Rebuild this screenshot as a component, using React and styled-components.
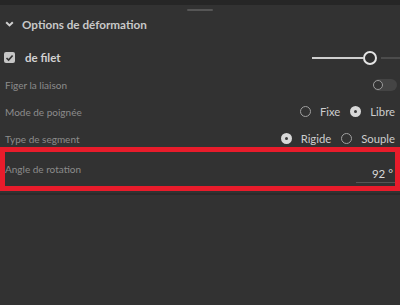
import styled, { createGlobalStyle } from "styled-components";

const Global = createGlobalStyle`
  html, body { margin: 0; padding: 0; background: #323232; }
  body { font-family: Lato, "Open Sans", sans-serif; }
  #root { width: 400px; height: 305px; overflow: hidden; }
`;

const Panel = styled.div`
  width: 400px;
  height: 305px;
  background: #323232;
  display: flex;
  flex-direction: column;
`;

const TopBand = styled.div`
  height: 5px;
  background: #262626;
`;

const Grip = styled.div`
  width: 26px;
  height: 2px;
  margin: 4px auto 0;
  border-radius: 1px;
  background: #565656;
`;

const Header = styled.div`
  height: 26px;
  display: flex;
  align-items: center;
  gap: 8px;
  padding: 0 5px;
  color: #c9c9c9;
  font-size: 11.7px;
  font-weight: 700;
`;

const Body = styled.div`
  margin-top: 7px;
  padding: 0 5px;
  display: flex;
  flex-direction: column;
`;

const Row = styled.div`
  height: ${(p) => p.$h || 27}px;
  display: flex;
  align-items: center;
  justify-content: space-between;
  outline: ${(p) => (p.$highlight ? "5px solid #e81c2b" : "none")};
`;

const Label = styled.span`
  color: #8c8c8c;
  font-size: 10px;
`;

const CheckLabel = styled.label`
  display: flex;
  align-items: center;
  gap: 10px;
  color: #d2d2d2;
  font-size: 11.5px;
  font-weight: 700;
  margin-left: -1px;
`;

const Box = styled.span`
  width: 11px;
  height: 11px;
  border-radius: 2px;
  background: #c6c6c6;
  display: flex;
  align-items: center;
  justify-content: center;
`;

const Slider = styled.div`
  display: flex;
  align-items: center;
  margin-right: -5px;
`;

const Track = styled.div`
  width: ${(p) => p.$w}px;
  height: 2px;
  background: ${(p) => (p.$on ? "#cfcfcf" : "#4c4c4c")};
`;

const Thumb = styled.div`
  width: 10px;
  height: 10px;
  border: 2px solid #e4e4e4;
  border-radius: 50%;
  background: #2f2f2f;
  margin: 0 4px 0 0;
`;

const Toggle = styled.div`
  width: 24px;
  height: 12px;
  border-radius: 6px;
  background: #444;
  display: flex;
  align-items: center;
  margin-right: -2px;
`;

const Knob = styled.div`
  width: 8px;
  height: 8px;
  border: 1.5px solid #9a9a9a;
  border-radius: 50%;
  background: #333;
`;

const Options = styled.div`
  display: flex;
  align-items: center;
  gap: 10px;
`;

const Option = styled.label`
  display: flex;
  align-items: center;
  gap: 9px;
  color: #cdcdcd;
  font-size: 11.3px;
`;

const Radio = styled.span`
  box-sizing: border-box;
  width: 11px;
  height: 11px;
  border-radius: 50%;
  border: ${(p) => (p.$on ? "4px solid #d8d8d8" : "1.5px solid #a0a0a0")};
  background: ${(p) => (p.$on ? "#3a3a3a" : "transparent")};
`;

const Value = styled.div`
  width: 37px;
  text-align: right;
  color: #dadada;
  font-size: 11.5px;
  padding: 5px 2px 2px 0;
  border-bottom: 1px solid #555;
  margin-bottom: -6px;
`;

const Divider = styled.div`
  height: 2px;
  margin-top: 7px;
  background: #2a2a2a;
`;

function Chevron() {
  return (
    <svg width="9" height="6" viewBox="0 0 9 6">
      <path d="M1.2 1.2 L4.5 4.4 L7.8 1.2" fill="none" stroke="#cfcfcf" strokeWidth="2" />
    </svg>
  );
}

function Check() {
  return (
    <svg width="9" height="8" viewBox="0 0 9 8">
      <path d="M1.5 4 L3.6 6 L7.6 1.5" fill="none" stroke="#333" strokeWidth="1.7" />
    </svg>
  );
}

function RadioGroup({ items, value }) {
  return (
    <Options>
      {items.map((it) => (
        <Option key={it}>
          <Radio $on={it === value} />
          {it}
        </Option>
      ))}
    </Options>
  );
}

export default function App() {
  return (
    <>
      <Global />
      <Panel>
        <TopBand />
        <Grip />
        <Header>
          <Chevron />
          Options de déformation
        </Header>
        <Body>
          <Row>
            <CheckLabel>
              <Box><Check /></Box>
              de filet
            </CheckLabel>
            <Slider>
              <Track $on $w={51} />
              <Thumb />
              <Track $w={19} />
            </Slider>
          </Row>
          <Row>
            <Label>Figer la liaison</Label>
            <Toggle><Knob /></Toggle>
          </Row>
          <Row>
            <Label>Mode de poignée</Label>
            <RadioGroup items={["Fixe", "Libre"]} value="Libre" />
          </Row>
          <Row>
            <Label>Type de segment</Label>
            <RadioGroup items={["Rigide", "Souple"]} value="Rigide" />
          </Row>
          <Row $highlight $h={34}>
            <Label>Angle de rotation</Label>
            <Value>92 °</Value>
          </Row>
        </Body>
        <Divider />
      </Panel>
    </>
  );
}
